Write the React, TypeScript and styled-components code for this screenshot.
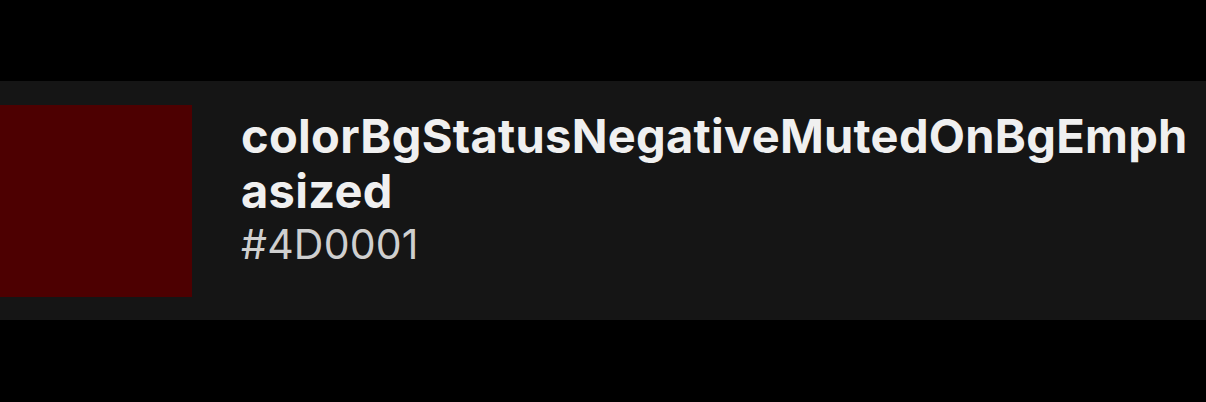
import React from "react";
import styled, { createGlobalStyle } from "styled-components";

const Global = createGlobalStyle`
  html, body { margin: 0; padding: 0; background: #000; }
  body { font-family: Inter, "Noto Sans", sans-serif; -webkit-font-smoothing: antialiased; }
`;

const Page = styled.div`
  width: 1206px;
  height: 402px;
  background: #000;
  display: flex;
  flex-direction: column;
  padding-top: 81px;
  box-sizing: border-box;
`;

const Card = styled.div`
  height: 239px;
  background: #151515;
  display: flex;
  align-items: flex-start;
  padding: 24px 14px 0 0;
  box-sizing: border-box;
  gap: 49px;
`;

const Swatch = styled.div<{ $color: string }>`
  flex: 0 0 192px;
  width: 192px;
  height: 192px;
  background: ${(p) => p.$color};
`;

const Info = styled.div`
  flex: 1;
  min-width: 0;
  display: flex;
  flex-direction: column;
  padding-top: 3px;
`;

const Name = styled.div`
  font-size: 47px;
  line-height: 55px;
  font-weight: 700;
  letter-spacing: 0.28px;
  color: #f0f0f0;
  word-break: break-all;
`;

const Hex = styled.div`
  font-size: 41px;
  line-height: 53px;
  font-weight: 400;
  letter-spacing: 0.2px;
  color: #cfcfcf;
`;

export default function App() {
  return (
    <>
      <Global />
      <Page>
        <Card>
          <Swatch $color="#4D0001" />
          <Info>
            <Name>colorBgStatusNegativeMutedOnBgEmphasized</Name>
            <Hex>#4D0001</Hex>
          </Info>
        </Card>
      </Page>
    </>
  );
}
